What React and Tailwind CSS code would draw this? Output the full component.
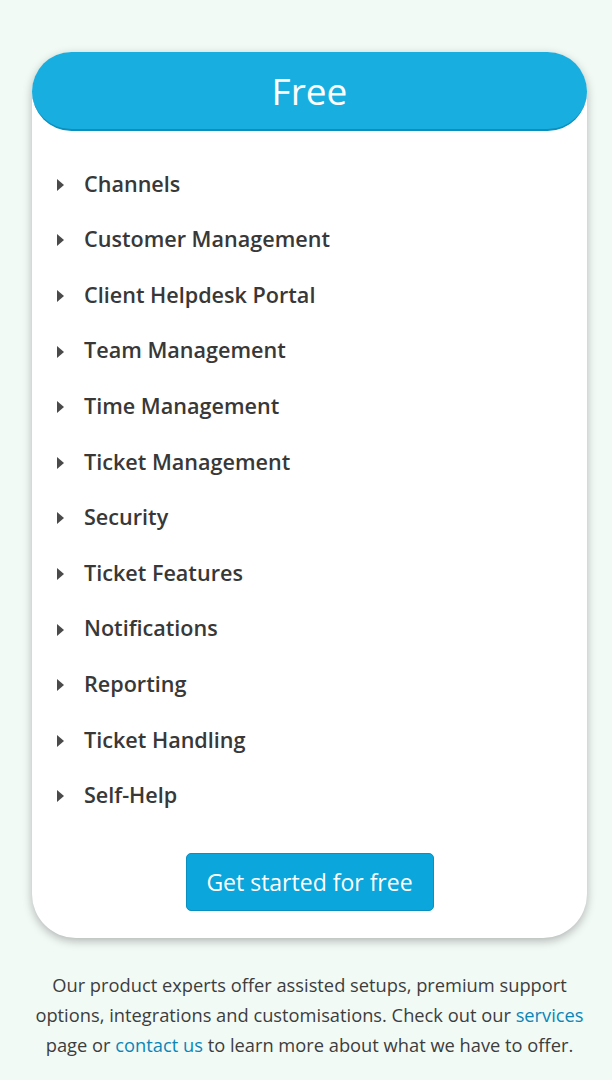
import React from "react";

const items = [
  "Channels",
  "Customer Management",
  "Client Helpdesk Portal",
  "Team Management",
  "Time Management",
  "Ticket Management",
  "Security",
  "Ticket Features",
  "Notifications",
  "Reporting",
  "Ticket Handling",
  "Self-Help",
];

export default function App() {
  return (
    <div
      className="min-h-[1080px] w-[612px] bg-[#f2faf6] pt-[52px]"
      style={{ fontFamily: "'Open Sans', Lato, sans-serif" }}
    >
      <div className="ml-[32px] w-[555px] rounded-t-[40px] rounded-b-[44px] bg-white shadow-[0_3px_10px_rgba(0,0,0,0.28)]">
        <div className="flex h-[79px] items-center justify-center rounded-full border-b-2 border-[#0b8fbd] bg-[#18afe0] text-[37px] text-white">
          Free
        </div>
        <ul className="pt-[26px]">
          {items.map((t) => (
            <li key={t} className="flex h-[55.6px] items-center pl-[25px]">
              <span className="h-0 w-0 border-y-[6px] border-l-[7px] border-y-transparent border-l-[#4a4a4a]" />
              <span className="ml-[20px] pb-[2px] text-[21.6px] font-semibold text-[#383838]">{t}</span>
            </li>
          ))}
        </ul>
        <div className="flex justify-center pt-[29px] pb-[27px]">
          <button className="h-[58px] w-[248px] rounded-[5px] border border-[#0a90c0] bg-[#0aa6dc] text-[23px] text-white">
            Get started for free
          </button>
        </div>
      </div>
      <p className="ml-[31px] mt-[32px] w-[557px] text-center text-[18.3px] leading-[30px] text-[#3d3d3d]">
        Our product experts offer assisted setups, premium support options, integrations and
        customisations. Check out our <span className="text-[#0a86b8]">services</span> page or{" "}
        <span className="text-[#0a86b8]">contact us</span> to learn more about what we have to offer.
      </p>
    </div>
  );
}
